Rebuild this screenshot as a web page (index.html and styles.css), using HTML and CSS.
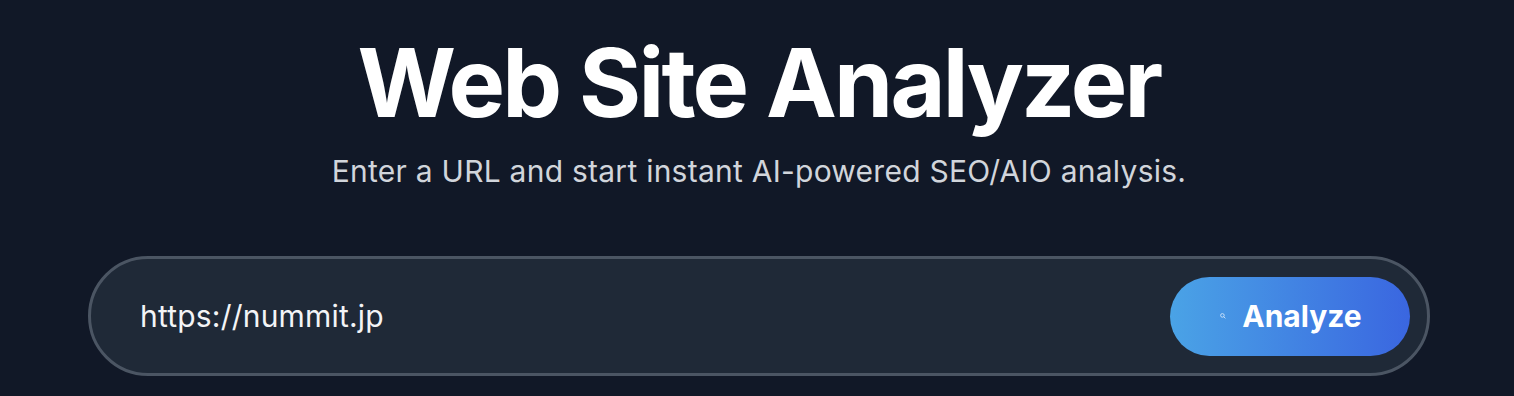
FILE: index.html
```html
<!DOCTYPE html>
<html lang="en">
<head>
    <meta charset="UTF-8">
    <meta name="viewport" content="width=device-width, initial-scale=1.0">
    <title>Web Site Analyzer</title>
    <link rel="stylesheet" href="styles.css">
</head>
<body>

<div class="container">
    <h1 class="title">Web Site Analyzer</h1>
    <p class="subtitle">Enter a URL and start instant AI-powered SEO/AIO analysis.</p>

    <!-- URL form -->
    <form class="search-box" onsubmit="return false;">
        <input type="text" class="url-input" value="https://nummit.jp">
        <button type="submit" class="analyze-btn">
            <svg class="btn-icon" viewBox="0 0 10 10" width="6" height="6">
                <circle cx="4" cy="4" r="3" fill="none" stroke="#cfe4fb" stroke-width="1.5"/>
                <line x1="6.2" y1="6.2" x2="9" y2="9" stroke="#cfe4fb" stroke-width="1.5"/>
            </svg>
            <span>Analyze</span>
        </button>
    </form>
</div>

</body>
</html>
```

FILE: styles.css
```css
html, body {
    margin: 0;
    padding: 0;
    background-color: #111827;
}
body {
    font-family: Inter, "Noto Sans", sans-serif;
    color: #fff;
}
.container {
    padding: 35px 84px 0 88px;
    text-align: center;
}
.title {
    margin: 0;
    font-size: 95px;
    line-height: 1;
    font-weight: 700;
    letter-spacing: -2.8px;
    color: #fff;
}
.subtitle {
    margin: 23px 0 0;
    font-size: 30px;
    line-height: 36px;
    letter-spacing: 0.25px;
    color: #d1d5db;
}
.search-box {
    margin-top: 67px;
    display: flex;
    align-items: center;
    height: 120px;
    box-sizing: border-box;
    padding: 0 17px 0 49px;
    background-color: #1f2937;
    border: 3px solid #4b5563;
    border-radius: 9999px;
}
.url-input {
    flex: 1;
    min-width: 0;
    background: transparent;
    border: none;
    outline: none;
    font-family: inherit;
    font-size: 30px;
    letter-spacing: 0.2px;
    color: #f3f4f6;
    padding: 0;
}
.analyze-btn {
    display: flex;
    align-items: center;
    justify-content: center;
    gap: 16px;
    width: 240px;
    height: 79px;
    border: none;
    border-radius: 9999px;
    background: linear-gradient(90deg, #4aa3e6, #3a66e0);
    color: #fff;
    font-family: inherit;
    font-size: 30px;
    font-weight: 700;
    cursor: pointer;
    padding: 0 0 0 2px;
}
.btn-icon {
    width: 6px;
    height: 6px;
}
```
